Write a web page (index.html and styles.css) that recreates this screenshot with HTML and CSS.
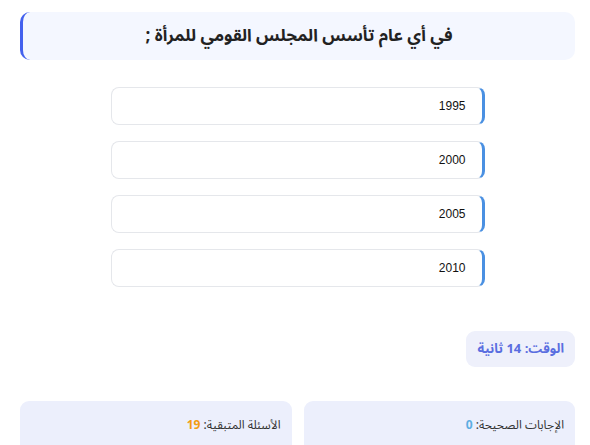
FILE: index.html
```html
<!DOCTYPE html>
<html lang="ar" dir="rtl">
<head>
<meta charset="utf-8">
<link rel="stylesheet" href="styles.css">
</head>
<body>
<div class="page">
  <div class="question">في أي عام تأسس المجلس القومي للمرأة ;</div>
  <div class="options">
    <div class="option">1995</div>
    <div class="option">2000</div>
    <div class="option">2005</div>
    <div class="option">2010</div>
  </div>
  <div class="timer-row">
    <div class="timer">الوقت: 14 ثانية</div>
  </div>
  <div class="stats">
    <div class="stat">الإجابات الصحيحة: <span class="correct">0</span></div>
    <div class="stat">الأسئلة المتبقية: <span class="remaining">19</span></div>
  </div>
</div>
</body>
</html>
```
FILE: styles.css
```css
html, body {
  margin: 0;
  padding: 0;
  background: #ffffff;
}
body {
  font-family: "Noto Sans Arabic", "Noto Sans", "DejaVu Sans", sans-serif;
  color: #222;
}
.page {
  padding: 12px 15px 0 20px;
}
.question {
  height: 48px;
  box-sizing: border-box;
  background: #f4f7ff;
  border-left: 3px solid #4361ee;
  border-radius: 10px;
  display: flex;
  align-items: center;
  justify-content: center;
  font-size: 17px;
  font-weight: 700;
  color: #222;
}
.options {
  width: 374px;
  margin: 27px auto 0;
  display: flex;
  flex-direction: column;
  gap: 16px;
}
.option {
  height: 38px;
  box-sizing: border-box;
  border: 1px solid #e5e7eb;
  border-right: 3px solid #4a90e2;
  border-radius: 8px;
  display: flex;
  align-items: center;
  padding-right: 16px;
  font-family: "Liberation Sans", Arial, sans-serif;
  font-size: 12px;
  color: #111;
}
.timer-row {
  margin-top: 44px;
  display: flex;
}
.timer {
  height: 36px;
  box-sizing: border-box;
  padding: 0 11px 0 12px;
  background: #eef0fb;
  border-radius: 9px;
  display: flex;
  align-items: center;
  font-size: 13px;
  font-weight: 700;
  color: #5a6ee0;
}
.stats {
  margin-top: 34px;
  display: flex;
  gap: 12px;
}
.stat {
  flex: 1;
  height: 60px;
  box-sizing: border-box;
  background: #eceffc;
  border-radius: 9px;
  padding: 12px 11px 0;
  font-size: 12px;
  color: #333;
}
.correct {
  color: #5dade2;
  font-weight: 700;
}
.remaining {
  color: #f39c12;
  font-weight: 700;
}
```
